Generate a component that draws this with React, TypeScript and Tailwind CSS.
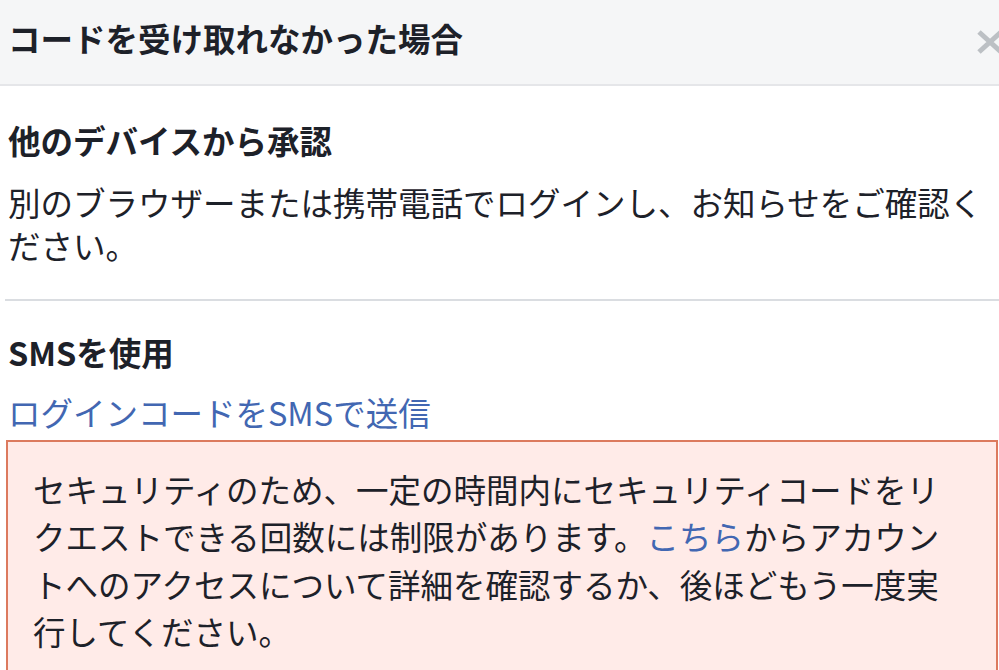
import React from "react"

const font = { fontFamily: '"Noto Sans CJK JP", "Noto Sans", sans-serif' }

const CloseIcon = () => (
  <svg width="30" height="26" viewBox="0 0 30 26" className="mr-[-6px] shrink-0">
    <path d="M4 3 L26 23 M26 3 L4 23" stroke="#bcc0c4" strokeWidth="5" strokeLinecap="butt" />
  </svg>
)

export default function App() {
  return (
    <div className="w-[999px] h-[670px] overflow-hidden bg-white text-[#1d2129]" style={font}>
      <div className="h-[86px] bg-[#f5f6f7] border-b-2 border-[#e5e6e9] pl-2 flex items-center justify-between">
        <h1 className="text-[32.5px] leading-[44px] font-bold mt-[-8px]">コードを受け取れなかった場合</h1>
        <CloseIcon />
      </div>

      <div className="pl-2">
        <h2 className="mt-[32px] text-[32.5px] leading-[44px] font-bold">他のデバイスから承認</h2>
        <p className="mt-[18px] text-[32.5px] leading-[43px]">
          別のブラウザーまたは携帯電話でログインし、お知らせをご確認ください。
        </p>
      </div>

      <div className="ml-[5px] mt-[33px] h-[2px] bg-[#dadde1]" />

      <div className="pl-2">
        <h2 className="mt-[29px] text-[32.5px] leading-[44px] font-bold">SMSを使用</h2>
        <a className="block mt-[16px] text-[32.5px] leading-[44px] text-[#4267b2]">ログインコードをSMSで送信</a>
      </div>

      <div className="ml-[6px] mr-[1px] mt-[6px] border-2 border-[#dc7a5e] bg-[#ffebe8] pl-[25px] pr-[43px] pt-[23px] pb-[20px]">
        <p className="text-[32.5px] leading-[47.3px]">
          セキュリティのため、一定の時間内にセキュリティコードをリクエストできる回数には制限があります。
          <a className="text-[#4267b2]">こちら</a>
          からアカウントへのアクセスについて詳細を確認するか、後ほどもう一度実行してください。
        </p>
      </div>
    </div>
  )
}
